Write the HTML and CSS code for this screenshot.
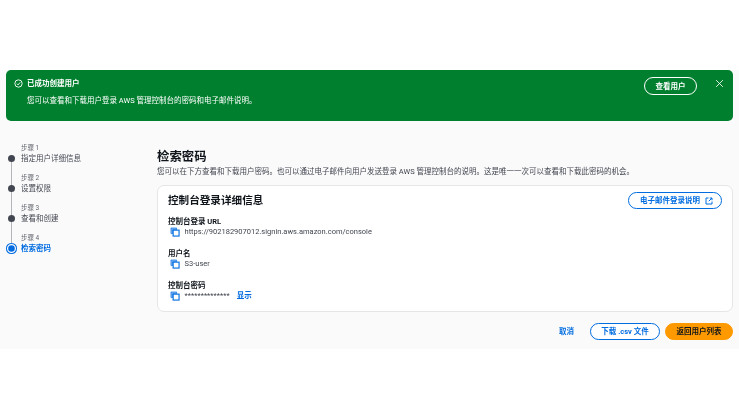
FILE: index.html
```html
<!DOCTYPE html>
<html lang="zh-CN">
<head>
<meta charset="utf-8">
<title>检索密码</title>
<link rel="stylesheet" href="styles.css">
</head>
<body>
<main class="page">
  <div class="flash">
    <svg class="flash-icon" viewBox="0 0 16 16"><circle cx="8" cy="8" r="6.5"/><path d="M5 8.3l2.2 2.2L11 6"/></svg>
    <div class="flash-body">
      <div class="flash-title">已成功创建用户</div>
      <div class="flash-text">您可以查看和下载用户登录 AWS 管理控制台的密码和电子邮件说明。</div>
    </div>
    <button class="btn btn-flash">查看用户</button>
    <svg class="flash-close" viewBox="0 0 16 16"><path d="M2 2l12 12M14 2L2 14"/></svg>
  </div>
  <div class="content">
    <nav class="steps">
      <div class="step"><div class="step-num">步骤 1</div><div class="step-row"><span class="dot"></span><span>指定用户详细信息</span></div></div>
      <div class="step"><div class="step-num">步骤 2</div><div class="step-row"><span class="dot"></span><span>设置权限</span></div></div>
      <div class="step"><div class="step-num">步骤 3</div><div class="step-row"><span class="dot"></span><span>查看和创建</span></div></div>
      <div class="step step-active"><div class="step-num">步骤 4</div><div class="step-row"><span class="dot dot-active"></span><span>检索密码</span></div></div>
    </nav>
    <section class="main">
      <h1 class="title">检索密码</h1>
      <p class="desc">您可以在下方查看和下载用户密码。也可以通过电子邮件向用户发送登录 AWS 管理控制台的说明。这是唯一一次可以查看和下载此密码的机会。</p>
      <div class="card">
        <div class="card-head">
          <h2 class="card-title">控制台登录详细信息</h2>
          <button class="btn btn-email">电子邮件登录说明
            <svg class="ext" viewBox="0 0 16 16"><path d="M7 2H2v12h12V9M9.5 2H14v4.5M14 2L7.5 8.5"/></svg>
          </button>
        </div>
        <div class="field">
          <div class="label">控制台登录 URL</div>
          <div class="value"><svg class="copy" viewBox="0 0 16 16"><path class="copy-back" d="M1.5 1.5h9v3h-6v6h-3z"/><rect class="copy-front" x="5" y="5" width="9.5" height="9.5"/></svg><span>https://902182907012.signin.aws.amazon.com/console</span></div>
        </div>
        <div class="field">
          <div class="label">用户名</div>
          <div class="value"><svg class="copy" viewBox="0 0 16 16"><path class="copy-back" d="M1.5 1.5h9v3h-6v6h-3z"/><rect class="copy-front" x="5" y="5" width="9.5" height="9.5"/></svg><span>S3-user</span></div>
        </div>
        <div class="field">
          <div class="label">控制台密码</div>
          <div class="value"><svg class="copy" viewBox="0 0 16 16"><path class="copy-back" d="M1.5 1.5h9v3h-6v6h-3z"/><rect class="copy-front" x="5" y="5" width="9.5" height="9.5"/></svg><span class="stars">**************</span><a class="show">显示</a></div>
        </div>
      </div>
      <div class="actions">
        <a class="cancel">取消</a>
        <button class="btn btn-csv">下载 .csv 文件</button>
        <button class="btn btn-primary">返回用户列表</button>
      </div>
    </section>
  </div>
</main>
</body>
</html>
```
FILE: styles.css
```css
* { box-sizing: border-box; }
html, body { margin: 0; padding: 0; background: #fff; }
body {
  font-family: Roboto, "Noto Sans CJK SC", sans-serif;
  font-size: 7.5px;
  line-height: 11px;
  color: #0f141a;
  padding-top: 70px;
}
.page { background: #fafafa; height: 279px; padding: 0 6px; filter: blur(0.3px); }
.flash {
  display: flex;
  align-items: flex-start;
  height: 51px;
  background: #00802f;
  border-radius: 5px;
  color: #fff;
  padding: 7px 0 0 8px;
}
.flash-icon { width: 9px; height: 9px; margin: 1.5px 4px 0 0; fill: none; stroke: #fff; stroke-width: 1.6; flex: none; }
.flash-body { flex: 1; }
.flash-title { font-weight: 700; line-height: 12px; padding-top: 1px; height: 13px; }
.flash-text { margin-top: 5px; line-height: 12px; }
.btn {
  font-family: inherit;
  font-size: 7.5px;
  font-weight: 700;
  line-height: 11px;
  border-radius: 9px;
  height: 17px;
  padding: 0;
  background: #fff;
  display: flex;
  align-items: center;
  justify-content: center;
  border: 1px solid #006ce0;
  color: #006ce0;
}
.btn-flash { width: 53px; height: 18px; background: transparent; border-color: #fff; color: #fff; margin-right: 17.5px; }
.flash-close { width: 9px; height: 9px; margin: 1.5px 9.5px 0 0; fill: none; stroke: #fff; stroke-width: 1.5; flex: none; }
.content { display: flex; padding-top: 21px; }
.steps { width: 151px; flex: none; padding-left: 15px; color: #424650; }
.step { position: relative; height: 30px; }
.step::before { content: ""; position: absolute; left: -10px; top: 18px; width: 1px; height: 30px; background: #b4b4bb; }
.step-active::before { display: none; }
.step-num { font-size: 6.5px; line-height: 10px; padding-top: 1px; height: 11px; color: #656871; }
.step-row { position: relative; line-height: 11px; height: 11px; }
.dot { position: absolute; left: -13px; top: 2px; width: 7px; height: 7px; border-radius: 50%; background: #424650; }
.dot-active { left: -15px; top: 0; width: 11px; height: 11px; background: #006ce0; box-shadow: inset 0 0 0 1px #006ce0, inset 0 0 0 2.2px #fff; }
.step-active .step-row { color: #006ce0; font-weight: 700; }
.main { flex: 1; }
.title { margin: 7px 0 0; font-size: 12.4px; line-height: 16px; font-weight: 700; }
.desc { margin: 1px 0 0; line-height: 11px; color: #424650; }
.card {
  margin-top: 8px;
  height: 127px;
  background: #fff;
  border: 1px solid #e6e6e8;
  border-radius: 7px;
  padding: 6px 10px 0;
}
.card-head { display: flex; justify-content: space-between; align-items: center; height: 17px; margin-bottom: 7px; }
.card-title { margin: 0; font-size: 10.6px; line-height: 14px; font-weight: 700; }
.btn-email { width: 94px; gap: 5px; padding-left: 3px; }
.ext { width: 8px; height: 8px; fill: none; stroke: #006ce0; stroke-width: 2; flex: none; }
.field { height: 32px; }
.label { height: 10px; line-height: 12px; font-weight: 700; }
.value { display: flex; align-items: center; height: 11px; color: #424650; }
.copy { width: 10px; height: 10px; margin: 0 5px 0 1.5px; flex: none; }
.copy-back { fill: #7fb4ef; stroke: #006ce0; stroke-width: 1; }
.copy-front { fill: #fff; stroke: #006ce0; stroke-width: 1.8; }
.show { color: #006ce0; font-weight: 700; margin-left: 7px; }
.actions { display: flex; justify-content: flex-end; align-items: center; gap: 5px; margin-top: 11px; }
.cancel { color: #006ce0; font-weight: 700; margin-right: 11px; }
.btn-csv { width: 70px; }
.btn-primary { width: 68px; background: #ff9900; border-color: #ff9900; color: #0f141a; }
```
